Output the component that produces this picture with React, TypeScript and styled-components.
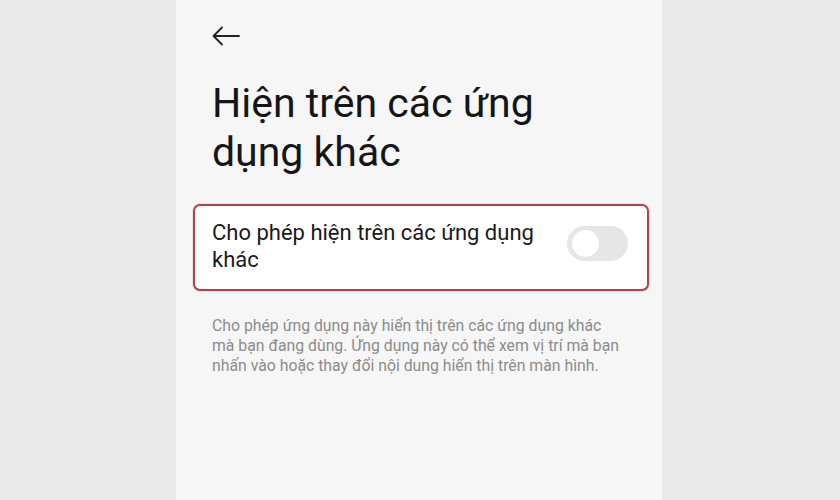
import React from "react";
import styled, { createGlobalStyle } from "styled-components";

const Global = createGlobalStyle`
  html, body { margin: 0; padding: 0; background: #e9e9e9; }
  body { font-family: Roboto, "Noto Sans", Arial, sans-serif; }
`;

const Stage = styled.div`
  width: 840px;
  height: 500px;
  display: flex;
  justify-content: center;
  background: #e9e9e9;
  overflow: hidden;
`;

const Screen = styled.div`
  width: 486px;
  height: 100%;
  margin-left: -2px;
  background: #f6f6f6;
  padding: 0 13px 0 17px;
  box-sizing: border-box;
  display: flex;
  flex-direction: column;
`;

const TopBar = styled.div`
  height: 72px;
  display: flex;
  align-items: center;
  padding-left: 19px;
  box-sizing: border-box;
`;

const BackButton = styled.button`
  border: 0;
  background: transparent;
  padding: 0;
  width: 28px;
  height: 20px;
  display: flex;
  cursor: pointer;
  svg { display: block; }
`;

const Title = styled.h1`
  margin: 7px 0 0 19px;
  font-size: 41px;
  font-weight: 400;
  line-height: 49px;
  color: #151515;
`;

const Card = styled.div`
  margin-top: 27px;
  border: 2px solid #b3404c;
  border-radius: 7px;
  background: #ffffff;
  box-shadow: 0 0 0 1px rgba(179, 64, 76, 0.12);
  padding: 13px 19px 16px 17px;
  display: flex;
  align-items: flex-start;
  justify-content: space-between;
  height: 87px;
  box-sizing: border-box;
`;

const CardLabel = styled.div`
  font-size: 22px;
  line-height: 27px;
  color: #1a1a1a;
  width: 345px;
`;

const Toggle = styled.div<{ $on?: boolean }>`
  margin-top: 7px;
  width: 61px;
  height: 35px;
  border-radius: 18px;
  background: ${(p) => (p.$on ? "#3478f6" : "#e6e6e6")};
  position: relative;
  flex-shrink: 0;
  &::after {
    content: "";
    position: absolute;
    top: 4px;
    left: ${(p) => (p.$on ? "30px" : "5px")};
    width: 27px;
    height: 27px;
    border-radius: 50%;
    background: #ffffff;
  }
`;

const Description = styled.p`
  margin: 25px 0 0 19px;
  font-size: 15.8px;
  line-height: 20px;
  color: #8c8c8c;
  white-space: nowrap;
`;

export default function App() {
  return (
    <>
      <Global />
      <Stage>
        <Screen>
          <TopBar>
            <BackButton aria-label="Quay lại">
              <svg width="28" height="20" viewBox="0 0 28 20" fill="none">
                <path
                  d="M27 10H2M10 1.5L1.5 10L10 18.5"
                  stroke="#222"
                  strokeWidth="1.8"
                  strokeLinecap="round"
                  strokeLinejoin="round"
                />
              </svg>
            </BackButton>
          </TopBar>
          <Title>
            Hiện trên các ứng
            <br />
            dụng khác
          </Title>
          <Card>
            <CardLabel>Cho phép hiện trên các ứng dụng khác</CardLabel>
            <Toggle />
          </Card>
          <Description>
            Cho phép ứng dụng này hiển thị trên các ứng dụng khác
            <br />
            mà bạn đang dùng. Ứng dụng này có thể xem vị trí mà bạn
            <br />
            nhấn vào hoặc thay đổi nội dung hiển thị trên màn hình.
          </Description>
        </Screen>
      </Stage>
    </>
  );
}
